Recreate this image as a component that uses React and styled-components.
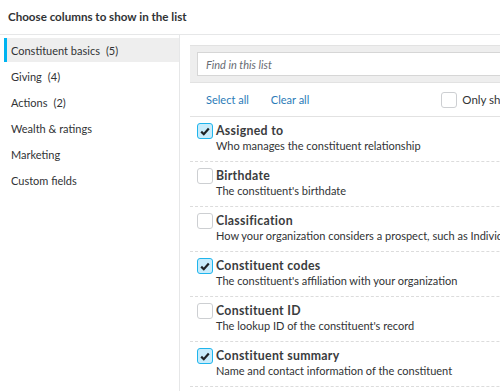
import React from "react";
import styled, { createGlobalStyle } from "styled-components";

const GlobalStyle = createGlobalStyle`
  html, body {
    margin: 0;
    padding: 0;
    overflow: hidden;
    background: #fff;
  }
  body {
    font-family: Lato, "Open Sans", sans-serif;
    color: #313335;
  }
`;

const categories = [
  { name: "Constituent basics", count: 5, active: true },
  { name: "Giving", count: 4 },
  { name: "Actions", count: 2 },
  { name: "Wealth & ratings" },
  { name: "Marketing" },
  { name: "Custom fields" },
];

const columns = [
  { title: "Assigned to", desc: "Who manages the constituent relationship", checked: true },
  { title: "Birthdate", desc: "The constituent's birthdate" },
  { title: "Classification", desc: "How your organization considers a prospect, such as Individual or Organization" },
  { title: "Constituent codes", desc: "The constituent's affiliation with your organization", checked: true },
  { title: "Constituent ID", desc: "The lookup ID of the constituent's record" },
  { title: "Constituent summary", desc: "Name and contact information of the constituent", checked: true },
];

const Page = styled.div`
  width: 620px;
  height: 391px;
  overflow: hidden;
`;

const Header = styled.div`
  height: 35px;
  box-sizing: border-box;
  padding: 10px 8px 0;
  border-bottom: 1px solid #e6e7e8;
  font-size: 11.6px;
  font-weight: 700;
  color: #313335;
`;

const Body = styled.div`
  display: flex;
  height: 356px;
`;

const Nav = styled.nav`
  width: 175px;
  margin-left: 4px;
  padding-top: 3px;
  border-right: 1px solid #e6e7e8;
  display: flex;
  flex-direction: column;
  gap: 2px;
`;

const NavItem = styled.div`
  height: 24px;
  display: flex;
  align-items: center;
  box-sizing: border-box;
  padding-left: 4px;
  font-size: 11px;
  color: #313335;
  background: ${(p) => (p.$active ? "#eeeeee" : "transparent")};
  border-left: 3px solid ${(p) => (p.$active ? "#00b4f1" : "transparent")};
  span {
    margin-left: 6px;
  }
`;

const Content = styled.div`
  flex: 1;
  padding: 10px 0 0 10px;
`;

const SearchBand = styled.div`
  background: #eeeeee;
  padding: 6px 7px;
  border-top: 1px solid #e2e2e2;
  border-bottom: 1px solid #e2e2e2;
`;

const SearchInput = styled.input`
  width: 100%;
  height: 24px;
  box-sizing: border-box;
  border: 1px solid #d6d6d6;
  padding: 0 8px;
  font-family: Lato, "Open Sans", sans-serif;
  font-size: 11px;
  font-style: italic;
  background: #fff;
  outline: none;
  &::placeholder {
    color: #686c73;
  }
`;

const Toolbar = styled.div`
  height: 33px;
  display: flex;
  align-items: center;
  padding-left: 16px;
  border-bottom: 1px solid #e2e2e2;
`;

const LinkButton = styled.button`
  border: 0;
  background: none;
  padding: 0;
  margin-right: 22px;
  font-family: Lato, "Open Sans", sans-serif;
  font-size: 11px;
  color: #2b7bb8;
  cursor: pointer;
`;

const OnlyShow = styled.label`
  margin-left: 110px;
  display: flex;
  align-items: center;
  gap: 5px;
  font-size: 11.5px;
  white-space: nowrap;
  color: #313335;
`;

const Box = styled.span`
  width: 16px;
  height: 16px;
  flex-shrink: 0;
  box-sizing: border-box;
  border-radius: 3px;
  display: flex;
  align-items: center;
  justify-content: center;
  border: ${(p) => (p.$checked ? "1.5px solid #1fb5ed" : "1px solid #cdcfd2")};
  background: ${(p) => (p.$checked ? "#c9ecfb" : "#fff")};
`;

const Row = styled.div`
  height: 45px;
  box-sizing: border-box;
  display: flex;
  align-items: flex-start;
  gap: 3px;
  padding: 6px 0 0 7px;
  border-bottom: 1px dashed #dcdcdc;
`;

const RowText = styled.div`
  display: flex;
  flex-direction: column;
  white-space: nowrap;
`;

const RowTitle = styled.div`
  font-size: 12.3px;
  font-weight: 700;
  letter-spacing: 0.3px;
  color: #3a3c3e;
  line-height: 16px;
`;

const RowDesc = styled.div`
  font-size: 11px;
  color: #313335;
  line-height: 14px;
`;

function Checkbox({ checked }) {
  return (
    <Box $checked={checked}>
      {checked && (
        <svg width="10" height="9" viewBox="0 0 10 9">
          <path d="M1.2 4.6 L3.8 7.2 L8.8 1.6" fill="none" stroke="#1f2326" strokeWidth="2.2" />
        </svg>
      )}
    </Box>
  );
}

export default function App() {
  return (
    <Page>
      <GlobalStyle />
      <Header>Choose columns to show in the list</Header>
      <Body>
        <Nav>
          {categories.map((c) => (
            <NavItem key={c.name} $active={c.active}>
              {c.name}
              {c.count !== undefined && <span>({c.count})</span>}
            </NavItem>
          ))}
        </Nav>
        <Content>
          <SearchBand>
            <SearchInput placeholder="Find in this list" />
          </SearchBand>
          <Toolbar>
            <LinkButton>Select all</LinkButton>
            <LinkButton>Clear all</LinkButton>
            <OnlyShow>
              <Checkbox />
              Only show selected
            </OnlyShow>
          </Toolbar>
          {columns.map((col) => (
            <Row key={col.title}>
              <Checkbox checked={col.checked} />
              <RowText>
                <RowTitle>{col.title}</RowTitle>
                <RowDesc>{col.desc}</RowDesc>
              </RowText>
            </Row>
          ))}
        </Content>
      </Body>
    </Page>
  );
}
